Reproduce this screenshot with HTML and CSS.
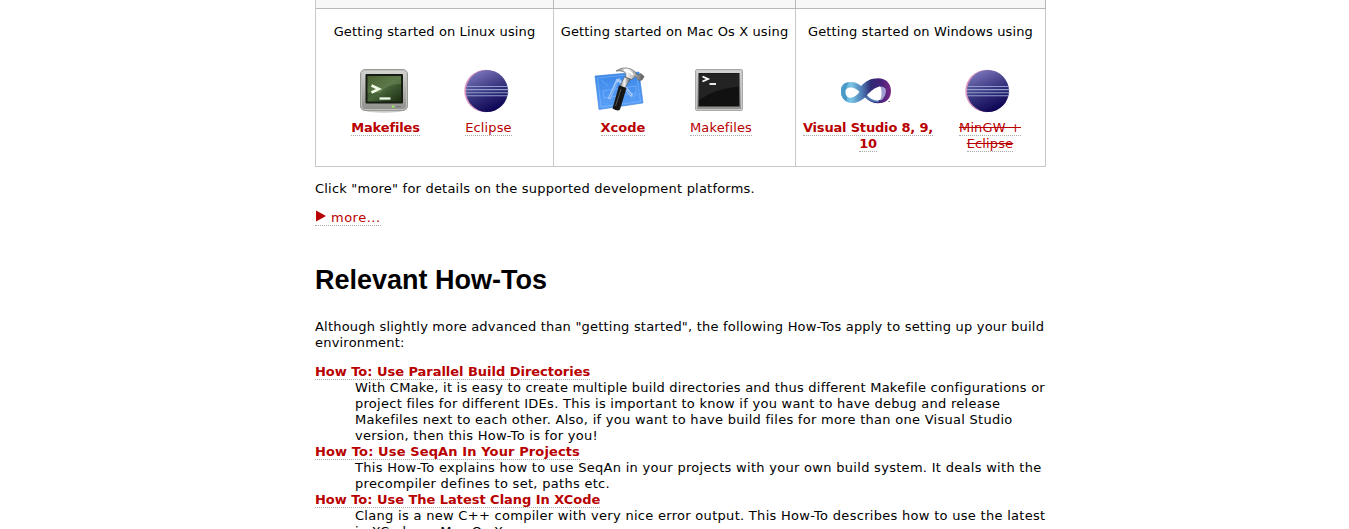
FILE: index.html
```html
<!DOCTYPE html>
<html lang="en">
<head>
<meta charset="utf-8">
<title>Getting Started</title>
<link rel="stylesheet" href="styles.css">
</head>
<body>
<svg class="defs" width="0" height="0" aria-hidden="true">
  <defs>
    <linearGradient id="ball" x1=".25" y1="0" x2=".7" y2="1"><stop offset="0" stop-color="#7d78bd"/><stop offset=".5" stop-color="#39357f"/><stop offset="1" stop-color="#08004f"/></linearGradient>
    <linearGradient id="metal" x1="0" y1="0" x2="0" y2="1"><stop offset="0" stop-color="#d6d6d4"/><stop offset="1" stop-color="#8e8e8b"/></linearGradient>
    <linearGradient id="green" x1="0" y1="0" x2="1" y2="1"><stop offset="0" stop-color="#2a4218"/><stop offset=".5" stop-color="#49653a"/><stop offset="1" stop-color="#1c2e12"/></linearGradient>
    <linearGradient id="blue" x1="0" y1="0" x2="0" y2="1"><stop offset="0" stop-color="#3b87e8"/><stop offset="1" stop-color="#5ba2fa"/></linearGradient>
    <linearGradient id="steel" x1="0" y1="0" x2="1" y2="0"><stop offset="0" stop-color="#777"/><stop offset=".4" stop-color="#f4f4f4"/><stop offset="1" stop-color="#555"/></linearGradient>
    <linearGradient id="loop" gradientUnits="userSpaceOnUse" x1="6" y1="0" x2="56" y2="0"><stop offset="0" stop-color="#4a9bc4"/><stop offset=".2" stop-color="#7cc6e6"/><stop offset=".42" stop-color="#4d7db4"/><stop offset=".6" stop-color="#2f2a73"/><stop offset=".8" stop-color="#45217a"/><stop offset="1" stop-color="#7b2a86"/></linearGradient>
    <g id="eclipse">
      <circle cx="30.500" cy="29" r="21.200" fill="#d993bd"/>
      <ellipse cx="32" cy="29" rx="21" ry="21" fill="url(#ball)"/>
      <path d="M11.500 24.500h41.500M11 27.600h42.500M11 30.700h42.500M11.500 33.800h41.500" stroke="#8f9dcc" stroke-width="1.100"/>
    </g>
  </defs>
</svg>
<main class="page">
  <div class="table">
    <div class="head"></div><div class="head"></div><div class="head"></div>
    <section class="cell linux">
      <p class="intro">Getting started on Linux using</p>
      <div class="tools">
        <div class="tool">
          <svg class="icon" viewBox="0 0 64 56">
            <ellipse cx="32" cy="48.500" rx="19" ry="2.200" fill="#ccc"/>
            <rect x="8.500" y="7.500" width="47" height="41" rx="4.500" fill="url(#metal)" stroke="#9a9a97"/>
            <rect x="9.500" y="8.500" width="45" height="39" rx="3.500" fill="none" stroke="#c0c0bd"/>
            <rect x="13.500" y="12" width="37.500" height="29.500" rx="1" fill="#171d12"/>
            <rect x="15.500" y="14" width="33.500" height="25.500" fill="url(#green)"/>
            <path d="M15.500 14h33.500v8Q35 22 28 31H15.500z" fill="#8daa70" opacity=".3"/>
            <path d="M19.500 23.500l7.500 3.500-7.500 3.500" fill="none" stroke="#f0fce8" stroke-width="2.500"/>
            <path d="M27.500 36.500h11" stroke="#f0fce8" stroke-width="2.300"/>
            <circle cx="41" cy="44.500" r="1.300" fill="#9be450"/>
            <path d="M44 44.500h5" stroke="#777"/>
          </svg>
          <b><a>Makefiles</a></b>
        </div>
        <div class="tool"><svg class="icon" viewBox="0 0 64 56"><use href="#eclipse"/></svg><span class="label"><a>Eclipse</a></span></div>
      </div>
    </section>
    <section class="cell mac">
      <p class="intro">Getting started on Mac Os X using</p>
      <div class="tools">
        <div class="tool">
          <svg class="icon" viewBox="0 0 64 56">
            <path d="M6 14L50 10L54 41L10 47.500z" fill="url(#blue)" stroke="#3c7fd8" stroke-width=".6"/>
            <path d="M8.500 16L47.500 12L51.500 39.500L12 45z M14 29l33-5v7l-32 5z M12 18l7 6M42 36l7-4" fill="none" stroke="#9cc8ff" stroke-width=".7" opacity=".6"/>
            <path d="M29 17l-9 20M29 17l14 17" stroke="#b4d3fc" stroke-width="3" opacity=".85"/>
            <path d="M28.500 20l-8 16M31 21l11 12" stroke="#5697ee"/>
            <path d="M35.500 15l6 2Q38 22 36 26l-5-2z" fill="url(#steel)" stroke="#444" stroke-width=".5"/>
            <path d="M27 9Q34 4 42 7Q46.500 9 48.500 13L52 11.500l3 3-2 3.500-3 .500-3.500-4-4 3-6-2.500Q38 11 34 9.500Q31 8.500 27 9z" fill="url(#steel)" stroke="#555" stroke-width=".6"/>
            <path d="M35 8Q41 8.500 44 13" fill="none" stroke="#fff" stroke-width="1.800"/>
            <path d="M30 23.500l7.500 2.500L31 47.500Q29 50 23.500 46.500z" fill="#151515"/>
            <path d="M32 27L26.500 44" stroke="#555"/>
          </svg>
          <b><a class="xcode">Xcode</a></b>
        </div>
        <div class="tool">
          <svg class="icon" viewBox="0 0 64 56">
            <rect x="8.500" y="7.500" width="47" height="41" rx="1.500" fill="url(#metal)" stroke="#aaa"/>
            <rect x="9.500" y="8.500" width="45" height="39" fill="none" stroke="#c9c9c9"/>
            <rect x="11.500" y="11" width="41" height="33.500" fill="#111"/>
            <path d="M12 11.500h40v13Q30 26 12 38z" fill="#303030" opacity=".6"/>
            <path d="M15.500 14.500l5.500 2.500-5.500 2.500" fill="none" stroke="#fff" stroke-width="1.800"/>
            <path d="M22.500 22h6.500" stroke="#fff" stroke-width="1.800"/>
          </svg>
          <span class="label"><a>Makefiles</a></span>
        </div>
      </div>
    </section>
    <section class="cell win">
      <p class="intro">Getting started on Windows using</p>
      <div class="tools">
        <div class="tool wide">
          <svg class="icon" viewBox="0 0 64 56">
            <path fill="url(#loop)" d="M6 29C6 23 10 20 16 20C20 20 23 21.500 26 24C31 19 36 16.300 43 16.300C51 16.300 56 21.500 56 29C56 36.500 51 41.300 43 41.300C38 41.300 34 39 30 35.500C26 39 22 41 17 41C11 41 6 36.500 6 29Z"/>
            <path d="M6 29C6 23 10 20 14 20.500Q9 25 12.500 35Q11 38 12 39.500Q6 37 6 29z" fill="#489bc6"/>
            <path d="M44 24.500Q50 24 51 28Q51 35 46 38.500L43 37z" fill="#a09fd0"/>
            <path d="M32 32.500Q37 37 44 37.500L44 40Q37 41 31 36z" fill="#4e77b1"/>
            <path d="M10.500 30C10.500 33.500 12.500 35.800 15.500 35.800C19 35.800 22 33 24.500 30C22 27 19 25.500 16 25.500C13 25.500 10.500 26.500 10.500 30ZM32 33C35 37 39 38.500 43 38.500C46 38 46.500 35 46.500 31.500C46.500 28 46 25.500 45 24.500C39.500 25.500 36 29 32 33Z" fill="#fff"/>
            <path d="M53.500 39.500h1.500" stroke="#777"/>
          </svg>
          <b><a>Visual Studio 8, 9,</a><br><a>10</a></b>
        </div>
        <div class="tool"><svg class="icon" viewBox="0 0 64 56"><use href="#eclipse"/></svg><span class="label"><a class="off">MinGW +</a><br><a class="off">Eclipse</a></span></div>
      </div>
    </section>
  </div>
  <p class="note">Click "more" for details on the supported development platforms.</p>
  <p class="more"><a><svg class="arrow" viewBox="0 0 12 12"><path d="M1 .500L11 6L1 11.500z" fill="#b80000"/></svg><span>more...</span></a></p>
  <h2>Relevant How-Tos</h2>
  <p class="lead">Although slightly more advanced than "getting started", the following How-Tos apply to setting up your build<br>environment:</p>
  <dl>
    <dt><a>How To: Use Parallel Build Directories</a></dt>
    <dd class="cmake">With CMake, it is easy to create multiple build directories and thus different Makefile configurations or<br>project files for different IDEs. This is important to know if you want to have debug and release<br>Makefiles next to each other. Also, if you want to have build files for more than one Visual Studio<br>version, then this How-To is for you!</dd>
    <dt class="airy"><a>How To: Use SeqAn In Your Projects</a></dt>
    <dd>This How-To explains how to use SeqAn in your projects with your own build system. It deals with the<br>precompiler defines to set, paths etc.</dd>
    <dt><a>How To: Use The Latest Clang In XCode</a></dt>
    <dd>Clang is a new C++ compiler with very nice error output. This How-To describes how to use the latest<br>in XCode on Mac Os X.</dd>
  </dl>
</main>
</body>
</html>
```
FILE: styles.css
```css
html, body { height: 100%; overflow: hidden; }
body { margin: 0; background: #fff; color: #000; font: 13px/16px Verdana, "DejaVu Sans", sans-serif; letter-spacing: 0.13px; }
.defs { position: absolute; }
.page { width: 731px; margin-left: 315px; white-space: nowrap; }
.table { display: grid; grid-template-columns: 238px 242px 250px; grid-template-rows: 9px 158px; border-left: 1px solid #c8c8c8; box-sizing: border-box; width: 731px; }
.head { background: #f7f7f7; border-right: 1px solid #b8b8b8; border-bottom: 1px solid #b8b8b8; box-sizing: border-box; }
.cell { border-right: 1px solid #c8c8c8; border-bottom: 1px solid #c8c8c8; box-sizing: border-box; text-align: center; }
.intro { margin: 15px 0 0; }
.tools { display: flex; justify-content: center; padding-top: 22px; }
.tool { display: flex; flex-direction: column; align-items: center; flex: none; width: 102px; }
.linux .tools { padding-left: 1px; }
.linux .tool { width: 103px; }
.mac .tools { padding-right: 9px; }
.mac .tool { width: 98px; }
.win .tools { justify-content: flex-start; padding-left: 3px; }
.win .tool { width: 106px; }
.win .wide { width: 136px; }
.icon { width: 64px; height: 56px; margin-bottom: 2px; }
a { color: #b80000; border-bottom: 1px dotted #aaa; }
b, dt { font-weight: bold; letter-spacing: -0.14px; }
dt { letter-spacing: -0.03px; }
.airy { letter-spacing: 0.12px; }
.xcode { letter-spacing: 0; }
b, .label { display: block; padding-left: 4px; }
.wide b { padding-left: 2px; letter-spacing: -0.18px; }
.off { text-decoration: line-through; }
.note { margin: 14px 0 0; letter-spacing: 0.21px; }
.more { margin: 13px 0 0; letter-spacing: 0.5px; }
.arrow { width: 12px; height: 12px; margin-right: 4px; }
h2 { font: bold 27px/32px "Liberation Sans", Arial, sans-serif; letter-spacing: 0; margin: 38px 0 0; }
.lead { margin: 23px 0 0; letter-spacing: 0.205px; }
dl { margin: 13px 0 0; }
dd { margin: 0 0 0 40px; letter-spacing: 0.295px; }
.cmake { letter-spacing: 0.275px; }
.cmake::first-line { letter-spacing: 0.235px; }
```
